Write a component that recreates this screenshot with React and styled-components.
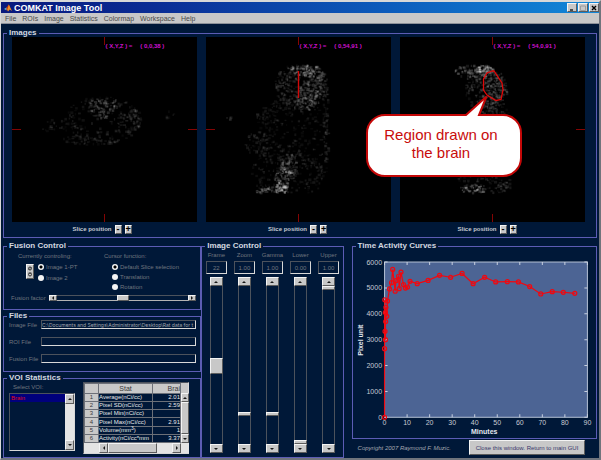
import React from 'react';
import styled, { createGlobalStyle, css } from 'styled-components';

const NAVY = '#001838';
const FACE = '#c8c8c8';
const DIM = '#70767f';

const GlobalStyle = createGlobalStyle`
  * { box-sizing: border-box; }
  body {
    margin: 0;
    background: ${NAVY};
    font-family: "Liberation Sans", Arial, sans-serif;
    font-size: 6px;
    line-height: 8px;
    color: ${DIM};
  }
  button, input { font: inherit; color: inherit; margin: 0; padding: 0; border-radius: 0; }
`;

const raised = css`
  background: ${FACE};
  border: 1px solid;
  border-color: #f4f4f4 #5c5c5c #5c5c5c #f4f4f4;
`;

const sunken = css`
  border: 1px solid;
  border-color: #4c525c #d8d8d8 #d8d8d8 #4c525c;
`;

/* ---------- window frame ---------- */

const Window = styled.div`
  min-height: 100vh;
  display: flex;
  flex-direction: column;
  border: 2px solid #70747c;
  border-top-color: #d8d8d8;
  border-left: 1px solid #d8d8d8;
  background: ${NAVY};
`;

const TitleBar = styled.header`
  height: 11px;
  display: flex;
  align-items: center;
  gap: 2px;
  padding: 0 0 0 3px;
  background: linear-gradient(90deg, #08187c 0%, #0a2c94 25%, #0c5cbc 65%, #1288d8 100%);
`;

const Title = styled.h1`
  margin: 0;
  flex: 1;
  color: #fff;
  font-size: 9px;
  line-height: 10px;
`;

const WindowButton = styled.button`
  ${raised}
  width: 10px;
  height: 9px;
  display: grid;
  place-items: center;
  svg { display: block; }
`;

const WindowButtons = styled.div`
  display: flex;
  gap: 1px;
`;

const MenuBar = styled.nav`
  height: 11px;
  display: flex;
  align-items: center;
  gap: 6px;
  padding: 0 4px;
  background: ${FACE};
  border-bottom: 1px solid #8c9098;
`;

const MenuItem = styled.button`
  border: 0;
  background: none;
  color: #484848;
  font-size: 7px;
  line-height: 9px;
`;

const Workspace = styled.main`
  flex: 1;
  display: flex;
  flex-direction: column;
  gap: 4px;
  padding: 5px 2px 0;
`;

/* ---------- panels ---------- */

const Panel = styled.fieldset`
  min-width: 0;
  margin: 0;
  padding: 0;
  display: flex;
  flex-direction: column;
  border: 1px solid #5c5cb4;
  flex: ${(p) => (p.$grow ? 1 : 'none')};
`;

const PanelTitle = styled.legend`
  margin-left: 3px;
  padding: 0 2px;
  color: #d4d8e0;
  font-size: 8px;
  font-weight: bold;
  line-height: 8px;
`;

const LowerArea = styled.div`
  flex: 1;
  display: grid;
  grid-template-columns: minmax(0, 198fr) minmax(0, 142fr) minmax(0, 253fr);
`;

const Column = styled.div`
  min-width: 0;
  display: flex;
  flex-direction: column;
  gap: ${(p) => p.$gap || 0}px;
  margin-left: ${(p) => (p.$inset ? 8 : 0)}px;
`;

/* ---------- slice views ---------- */

const SliceGrid = styled.div`
  display: grid;
  grid-template-columns: repeat(3, 1fr);
  gap: 9px;
  padding: 0 11px 1px 8px;
`;

const Viewport = styled.div`
  position: relative;
  aspect-ratio: 1;
  background: #000;
`;

const SliceDrawing = styled.svg`
  display: block;
  width: 100%;
  height: 100%;
`;

const Readout = styled.div`
  position: absolute;
  top: 5px;
  left: 50%;
  display: flex;
  gap: 8px;
  padding-left: 1px;
  color: #d010d0;
  font-weight: bold;
  white-space: nowrap;
`;

const SliceBar = styled.div`
  height: 14px;
  display: flex;
  align-items: center;
  justify-content: center;
  gap: 3px;
  padding-right: ${(p) => p.$trail}px;
  color: #c4c8d0;
  font-weight: bold;
`;

const StepButton = styled.button`
  ${raised}
  width: 7px;
  height: 9px;
  color: #000;
  font-size: 9px;
  font-weight: bold;
  line-height: 7px;
  display: grid;
  place-items: center;
`;

const Callout = styled.div`
  position: absolute;
  top: 57px;
  left: -35px;
  width: 158px;
  height: 84px;
`;

const CalloutShape = styled.svg`
  display: block;
  width: 158px;
  height: 84px;
`;

const CalloutText = styled.p`
  position: absolute;
  inset: 20px 6px 5px 0;
  margin: 0;
  display: grid;
  place-content: center;
  text-align: center;
  color: #c80c0c;
  font-size: 15px;
  line-height: 18px;
`;

/* ---------- form parts ---------- */

const FusionGrid = styled.div`
  display: grid;
  grid-template-columns: 86px 1fr;
  padding: 2px 4px 0 14px;
`;

const GroupLabel = styled.div`
  height: 8px;
`;

const RadioCluster = styled.div`
  display: flex;
  align-items: center;
  gap: 4px;
  padding-left: 8px;
`;

const RadioList = styled.div`
  display: flex;
  flex-direction: column;
  gap: ${(p) => p.$gap}px;
  padding-top: 3px;
`;

const RadioLabel = styled.label`
  display: flex;
  align-items: center;
  gap: 2px;
  line-height: 8px;
  white-space: nowrap;
`;

const Radio = styled.input`
  appearance: none;
  width: 6px;
  height: 6px;
  border-radius: 50%;
  background: #f4f4f4;
  &:checked {
    background: radial-gradient(circle, #000 0 1px, #f4f4f4 2px);
  }
`;

const LockButton = styled.button`
  ${raised}
  width: 8px;
  height: 15px;
  svg { display: block; }
`;

const SliderRow = styled.div`
  display: flex;
  align-items: center;
  gap: 3px;
  padding: 3px 4px 7px 7px;
`;

const HSlider = styled.div`
  flex: 1;
  height: 6px;
  display: flex;
  align-items: stretch;
`;

const ArrowButton = styled.button`
  ${raised}
  flex: none;
  width: ${(p) => p.$w}px;
  height: ${(p) => p.$h}px;
  display: grid;
  place-items: center;
  svg { display: block; }
`;

const HRange = styled.input`
  appearance: none;
  flex: 1;
  min-width: 0;
  height: 6px;
  background: transparent;
  border-top: 1px solid #4c525c;
  border-bottom: 1px solid #b4b4b4;
  &::-webkit-slider-thumb {
    appearance: none;
    ${raised}
    width: 12px;
    height: 6px;
  }
`;

const FileGrid = styled.div`
  display: grid;
  grid-template-columns: 32px 1fr;
  row-gap: 8px;
  padding: 0 4px 8px 5px;
  align-items: center;
`;

const FileLabel = styled.label`
  white-space: nowrap;
`;

const FileInput = styled.input`
  ${sunken}
  min-width: 0;
  width: 100%;
  height: 9px;
  background: transparent;
  color: #a0a4ac;
  font-family: Inter, "Liberation Sans", sans-serif;
  font-size: 5px;
`;

/* ---------- VOI statistics ---------- */

const VoiGrid = styled.div`
  display: grid;
  grid-template-columns: 66px 106px;
  column-gap: 8px;
  padding: 0 4px 2px 5px;
`;

const VoiPicker = styled.div`
  padding-top: 1px;
`;

const PickerLabel = styled.div`
  padding-left: 4px;
  height: 10px;
`;

const ListBox = styled.div`
  ${sunken}
  height: 58px;
  display: flex;
`;

const ListItems = styled.ul`
  flex: 1;
  margin: 0;
  padding: 0;
  list-style: none;
`;

const ListItem = styled.li`
  padding-left: 1px;
  line-height: 8px;
  background: #00007c;
  color: #e00818;
`;

const ScrollV = styled.div`
  width: 9px;
  display: flex;
  flex-direction: column;
  justify-content: space-between;
  background: #e4e4e4;
`;

const ScrollH = styled.div`
  grid-column: 1 / -1;
  height: 10px;
  display: flex;
  padding: 0 8px 0 15px;
  background: #e4e4e4;
`;

const ScrollThumb = styled.div`
  ${raised}
  flex: ${(p) => p.$size};
`;

const ScrollGap = styled.div`
  flex: ${(p) => p.$size};
`;

const StatsFrame = styled.div`
  ${sunken}
  display: grid;
  grid-template-columns: 1fr 8px;
  background: ${FACE};
`;

const StatsTable = styled.table`
  width: 96px;
  height: 60px;
  table-layout: fixed;
  border-collapse: collapse;
  color: #e8e8e8;
  line-height: 7px;
  background: ${NAVY};
  th, td {
    padding: 0;
    border: 1px solid #6c7078;
    font-weight: normal;
    white-space: nowrap;
  }
  th { background: ${FACE}; color: #383838; text-align: center; }
  thead th { height: 10px; font-size: 7px; }
  sup { font-size: 5px; line-height: 0; vertical-align: 2px; }
`;

const StatName = styled.td`
  text-align: left;
`;

const StatValue = styled.td`
  text-align: right;
`;

const BrainHead = styled.th`
  && { text-align: right; }
`;

const TableScroll = styled.div`
  display: flex;
  flex-direction: column;
  padding-top: 10px;
`;

/* ---------- image control ---------- */

const ControlGrid = styled.div`
  flex: 1;
  display: grid;
  grid-template-columns: repeat(5, 1fr);
  padding: 1px 0 4px;
`;

const ControlColumn = styled.div`
  display: flex;
  flex-direction: column;
  align-items: center;
`;

const ControlLabel = styled.label`
  height: 10px;
`;

const ControlValue = styled.input`
  ${sunken}
  width: 21px;
  height: 13px;
  margin-bottom: 3px;
  background: transparent;
  text-align: center;
`;

const VRange = styled.input`
  appearance: none;
  writing-mode: vertical-lr;
  direction: rtl;
  flex: 1;
  width: 13px;
  min-height: 0;
  background: transparent;
  border: solid #4c525c;
  border-width: 0 1px;
  &::-webkit-slider-thumb {
    appearance: none;
    ${raised}
    width: 13px;
    height: ${(p) => p.$thumb}px;
  }
`;

/* ---------- chart and footer ---------- */

const Chart = styled.svg`
  display: block;
  width: 100%;
  font-size: 7px;
  fill: #c8ccd4;
`;

const Footer = styled.footer`
  flex: 1;
  display: flex;
  align-items: center;
  justify-content: space-between;
  padding: 0 12px 2px 6px;
`;

const Copyright = styled.small`
  color: #a4a8b0;
  font-size: 6px;
  font-style: italic;
`;

const CloseButton = styled.button`
  ${raised}
  width: 116px;
  height: 15px;
  color: #38386c;
`;

/* ---------- data ---------- */

const MENUS = ['File', 'ROIs', 'Image', 'Statistics', 'Colormap', 'Workspace', 'Help'];

const SLICES = [
  {
    id: 'axial',
    position: '( 0,0,38 )',
    trail: 5,
    blobs: [
      { x: 90, y: 82, rx: 38, ry: 24, n: 160, v: 0.09 },
      { x: 84, y: 68, rx: 9, ry: 7, n: 40, v: 0.15 },
      { x: 99, y: 66, rx: 8, ry: 7, n: 30, v: 0.15 },
      { x: 91, y: 77, rx: 6, ry: 4, n: 16, v: 0.2 },
      { x: 119, y: 83, rx: 9, ry: 12, n: 50, v: 0.12 },
      { x: 78, y: 102, rx: 28, ry: 5, n: 60, v: 0.09 },
      { x: 45, y: 88, rx: 18, ry: 7, n: 30, v: 0.08 },
      { x: 155, y: 75, rx: 6, ry: 6, n: 6, v: 0.1 },
    ],
  },
  {
    id: 'coronal',
    position: '( 0,54,91 )',
    trail: 2,
    blobs: [
      { x: 95, y: 48, rx: 27, ry: 24, n: 340, v: 0.12 },
      { x: 98, y: 32, rx: 14, ry: 7, n: 60, v: 0.26 },
      { x: 108, y: 46, rx: 9, ry: 14, n: 70, v: 0.18 },
      { x: 97, y: 62, rx: 9, ry: 14, n: 60, v: 0.15 },
      { x: 86, y: 96, rx: 36, ry: 38, n: 240, v: 0.07 },
      { x: 119, y: 88, rx: 3, ry: 44, n: 70, v: 0.1 },
      { x: 60, y: 78, rx: 12, ry: 10, n: 26, v: 0.1 },
      { x: 52, y: 106, rx: 14, ry: 12, n: 60, v: 0.1 },
      { x: 82, y: 136, rx: 38, ry: 24, n: 220, v: 0.08 },
      { x: 82, y: 128, rx: 8, ry: 12, n: 80, v: 0.18 },
      { x: 76, y: 141, rx: 8, ry: 12, n: 70, v: 0.2 },
      { x: 74, y: 152, rx: 6, ry: 8, n: 34, v: 0.4 },
      { x: 64, y: 154, rx: 15, ry: 5, n: 44, v: 0.26 },
      { x: 20, y: 81, rx: 5, ry: 3, n: 5, v: 0.1 },
    ],
  },
  {
    id: 'sagittal',
    position: '( 54,0,91 )',
    trail: 11,
    blobs: [
      { x: 74, y: 33, rx: 20, ry: 8, n: 100, v: 0.2 },
      { x: 84, y: 31, rx: 8, ry: 4, n: 24, v: 0.3 },
      { x: 86, y: 52, rx: 21, ry: 24, n: 240, v: 0.12 },
      { x: 94, y: 50, rx: 9, ry: 14, n: 80, v: 0.15 },
      { x: 90, y: 76, rx: 18, ry: 14, n: 90, v: 0.09 },
      { x: 84, y: 144, rx: 28, ry: 14, n: 110, v: 0.1 },
      { x: 73, y: 153, rx: 12, ry: 6, n: 55, v: 0.26 },
      { x: 104, y: 148, rx: 8, ry: 5, n: 16, v: 0.13 },
    ],
  },
];

const STATS = [
  ['Average(nCi/cc)', '2.01'],
  ['Pixel SD(nCi/cc)', '2.59'],
  ['Pixel Min(nCi/cc)', ''],
  ['Pixel Max(nCi/cc)', '2.91'],
  [<>Volume(mm<sup>3</sup>)</>, '1'],
  ['Activity(nCi/cc*mm', '3.37'],
];

const CONTROLS = [
  { name: 'Frame', text: '22', value: 49, thumb: 16 },
  { name: 'Zoom', text: '1.00', value: 18, thumb: 4 },
  { name: 'Gamma', text: '1.00', value: 18, thumb: 4 },
  { name: 'Lower', text: '0.00', value: 0, thumb: 4 },
  { name: 'Upper', text: '1.00', value: 100, thumb: 4 },
];

const CURVE = [
  [0, 0], [0, 2650], [0.1, 4540], [0.2, 3320], [0.4, 3000], [0.4, 4050], [0.5, 3700],
  [0.6, 4250], [1, 3900], [1.3, 4490], [2.2, 4960], [3.1, 5200], [3.6, 5715], [4.7, 4870],
  [5, 5280], [6.2, 5450], [6.5, 4970], [7.3, 5610], [8.4, 5130], [9.3, 4995], [10.2, 5035],
  [11.3, 5255], [14.5, 5165], [19.3, 5290], [24.4, 5485], [29.3, 5410], [34.4, 5560],
  [39.3, 5165], [44.4, 5410], [49.3, 5230], [54.5, 5240], [59.4, 5230], [64.4, 5050],
  [69.3, 4765], [74.4, 4855], [79.3, 4830], [84.4, 4790],
];

/* ---------- drawings ---------- */

function randomSource(seed) {
  let s = seed;
  return () => {
    s = (s * 1664525 + 1013904223) % 4294967296;
    return s / 4294967296;
  };
}

function speckles(blobs, seed) {
  const rnd = randomSource(seed);
  const out = [];
  blobs.forEach((b) => {
    for (let i = 0; i < b.n; i += 1) {
      const a = rnd() * Math.PI * 2;
      const r = Math.sqrt(rnd());
      const x = b.x + Math.cos(a) * r * b.rx;
      const y = b.y + Math.sin(a) * r * b.ry;
      const w = 1.2 + rnd() * 2;
      const h = 1.2 + rnd() * 1.6;
      const o = b.v * (0.3 + rnd() * 0.8);
      if (y > 27.5 && y < 155) out.push({ x, y, w, h, o });
    }
  });
  return out;
}

const SPECKLES = SLICES.map((s, i) => speckles(s.blobs, 77 + i * 991));

function Slice({ slice, index, children }) {
  return (
    <div>
      <Viewport>
        <SliceDrawing viewBox="0 0 185 185" aria-label={`${slice.id} slice`}>
          {SPECKLES[index].map((s, i) => (
            <rect key={i} x={s.x} y={s.y} width={s.w} height={s.h} fill="#fff" opacity={s.o} />
          ))}
          <path d="M92.5 0V8M92.5 177V185M0 92.5H9M176 92.5H185" stroke="#840404" />
          {slice.id === 'coronal' && <path d="M92.5 34V61" stroke="#d00808" strokeWidth="1.4" />}
          {slice.id === 'sagittal' && (
            <path
              d="M92 34L87 36L83.5 42V53L87 58L96 63.5L101 62.5L103 53L102 46L94 34Z"
              fill="none"
              stroke="#e00808"
              strokeWidth="1.3"
            />
          )}
        </SliceDrawing>
        <Readout>
          <span>( X,Y,Z ) =</span>
          <span>{slice.position}</span>
        </Readout>
        {children}
      </Viewport>
      <SliceBar $trail={slice.trail}>
        <span>Slice position</span>
        <StepButton aria-label="Previous slice">-</StepButton>
        <StepButton aria-label="Next slice">+</StepButton>
      </SliceBar>
    </div>
  );
}

const ARROWS = {
  up: 'M0 3L2 1L4 3Z',
  down: 'M0 1L2 3L4 1Z',
  left: 'M3 0L1 2L3 4Z',
  right: 'M1 0L3 2L1 4Z',
};

function Arrow({ dir, w, h }) {
  return (
    <ArrowButton $w={w} $h={h} aria-label={dir}>
      <svg width="4" height="4" viewBox="0 0 4 4"><path d={ARROWS[dir]} fill="#181818" /></svg>
    </ArrowButton>
  );
}

function ActivityChart() {
  const px = (m) => 31.5 + m * 2.25;
  const py = (v) => 167 - v * (155 / 6000);
  const line = CURVE.map(([m, v]) => `${px(m).toFixed(1)},${py(v).toFixed(1)}`).join(' ');
  const xs = [0, 10, 20, 30, 40, 50, 60, 70, 80, 90];
  const ys = [0, 1000, 2000, 3000, 4000, 5000, 6000];
  return (
    <Chart viewBox="0 0 243 188" aria-label="Pixel unit over minutes">
      <rect x="31.5" y="12" width="202.5" height="155" fill="#4c6494" stroke="#b4c0d4" />
      {xs.map((m) => (
        <g key={m}>
          <path d={`M${px(m)} 167v-3M${px(m)} 12v3`} stroke="#c8d0e0" />
          <text x={px(m)} y="175" textAnchor="middle">{m}</text>
        </g>
      ))}
      {ys.map((v) => (
        <g key={v}>
          <path d={`M31.5 ${py(v)}h3M234 ${py(v)}h-3`} stroke="#c8d0e0" />
          <text x="29" y={py(v) + 2.5} textAnchor="end">{v}</text>
        </g>
      ))}
      <text x="131" y="184" textAnchor="middle" fontWeight="bold" fill="#e4e8f0">Minutes</text>
      <text transform="translate(10 90) rotate(-90)" textAnchor="middle" fontWeight="bold" fill="#e4e8f0">
        Pixel unit
      </text>
      <polyline points={line} fill="none" stroke="#f00810" strokeWidth="1.2" />
      {CURVE.map(([m, v], i) => (
        <circle key={i} cx={px(m)} cy={py(v)} r="2" fill="none" stroke="#f00810" strokeWidth="1.2" />
      ))}
    </Chart>
  );
}

export default function App() {
  return (
    <Window>
      <GlobalStyle />
      <TitleBar>
        <svg width="8" height="8" viewBox="0 0 8 8" aria-hidden="true">
          <path d="M0 5L2.5 3.6L4 4.6L2.4 6.2Z" fill="#5cb8d8" />
          <path d="M2.5 3.6L4.8 0.6L6 2.4L4 6L2.4 6.2Z" fill="#b83010" />
          <path d="M4.8 0.6L8 7L5.8 5.6L4 7.6L3.2 6Z" fill="#f09028" />
        </svg>
        <Title>COMKAT Image Tool</Title>
        <WindowButtons>
          <WindowButton aria-label="Minimize">
            <svg width="6" height="6"><path d="M1 5H4" stroke="#202020" strokeWidth="1.5" /></svg>
          </WindowButton>
          <WindowButton aria-label="Maximize">
            <svg width="6" height="6"><path d="M.5 1H5.5V5.5H.5Z" stroke="#9c9c9c" fill="none" /></svg>
          </WindowButton>
          <WindowButton aria-label="Close">
            <svg width="6" height="6"><path d="M1 1L5 5M5 1L1 5" stroke="#000" strokeWidth="1.4" /></svg>
          </WindowButton>
        </WindowButtons>
      </TitleBar>
      <MenuBar>
        {MENUS.map((m) => <MenuItem key={m}>{m}</MenuItem>)}
      </MenuBar>

      <Workspace>
        <Panel>
          <PanelTitle>Images</PanelTitle>
          <SliceGrid>
            {SLICES.map((s, i) => (
              <Slice key={s.id} slice={s} index={i}>
                {s.id === 'sagittal' && (
                  <Callout>
                    <CalloutShape viewBox="0 0 158 84" aria-hidden="true">
                      <path
                        d="M20 21H101L121.500 2.500L114 21H138A18 18 0 0 1 156 39V64A18 18 0 0 1 138 82H20A18 18 0 0 1 2 64V39A18 18 0 0 1 20 21Z"
                        fill="#fff"
                        stroke="#c40808"
                        strokeWidth="2"
                      />
                    </CalloutShape>
                    <CalloutText>
                      Region drawn on<br />the brain
                    </CalloutText>
                  </Callout>
                )}
              </Slice>
            ))}
          </SliceGrid>
        </Panel>

        <LowerArea>
          <Column $gap={2}>
            <Panel>
              <PanelTitle>Fusion Control</PanelTitle>
              <FusionGrid>
                <div role="radiogroup" aria-labelledby="controlling">
                  <GroupLabel id="controlling">Currently controling:</GroupLabel>
                  <RadioCluster>
                    <LockButton aria-label="Link images">
                      <svg width="6" height="13" viewBox="0 0 6 13">
                        <g fill="none" stroke="#303030">
                          <circle cx="3" cy="3.500" r="1.500" />
                          <circle cx="3" cy="9.500" r="1.500" />
                          <path d="M1.500 5L4.500 2M1.500 8H4.500" strokeWidth=".7" />
                        </g>
                      </svg>
                    </LockButton>
                    <RadioList $gap={3}>
                      <RadioLabel><Radio type="radio" name="image" defaultChecked />Image 1-PT</RadioLabel>
                      <RadioLabel><Radio type="radio" name="image" />Image 2</RadioLabel>
                    </RadioList>
                  </RadioCluster>
                </div>
                <div role="radiogroup" aria-labelledby="cursor">
                  <GroupLabel id="cursor">Cursor function:</GroupLabel>
                  <RadioCluster>
                    <RadioList $gap={2}>
                      <RadioLabel><Radio type="radio" name="cursor" defaultChecked />Default Slice selection</RadioLabel>
                      <RadioLabel><Radio type="radio" name="cursor" />Translation</RadioLabel>
                      <RadioLabel><Radio type="radio" name="cursor" />Rotation</RadioLabel>
                    </RadioList>
                  </RadioCluster>
                </div>
              </FusionGrid>
              <SliderRow>
                <label htmlFor="fusion">Fusion factor</label>
                <HSlider>
                  <Arrow dir="left" w={8} h={6} />
                  <HRange id="fusion" type="range" defaultValue="50" />
                  <Arrow dir="right" w={8} h={6} />
                </HSlider>
              </SliderRow>
            </Panel>

            <Panel>
              <PanelTitle>Files</PanelTitle>
              <FileGrid>
                <FileLabel htmlFor="f-image">Image File</FileLabel>
                <FileInput id="f-image" defaultValue="C:\Documents and Settings\Administrator\Desktop\Rat data for t" />
                <FileLabel htmlFor="f-roi">ROI File</FileLabel>
                <FileInput id="f-roi" />
                <FileLabel htmlFor="f-fusion">Fusion File</FileLabel>
                <FileInput id="f-fusion" />
              </FileGrid>
            </Panel>

            <Panel $grow>
              <PanelTitle>VOI Statistics</PanelTitle>
              <VoiGrid>
                <VoiPicker>
                  <PickerLabel id="voi">Select VOI:</PickerLabel>
                  <ListBox>
                    <ListItems role="listbox" aria-labelledby="voi">
                      <ListItem role="option" aria-selected="true">Brain</ListItem>
                    </ListItems>
                    <ScrollV>
                      <Arrow dir="up" w={9} h={10} />
                      <Arrow dir="down" w={9} h={10} />
                    </ScrollV>
                  </ListBox>
                </VoiPicker>
                <StatsFrame>
                  <StatsTable>
                    <colgroup>
                      <col width="14" />
                      <col width="54" />
                      <col width="28" />
                    </colgroup>
                    <thead>
                      <tr><th /><th>Stat</th><BrainHead>Brai</BrainHead></tr>
                    </thead>
                    <tbody>
                      {STATS.map(([name, value], i) => (
                        <tr key={i}>
                          <th>{i + 1}</th>
                          <StatName>{name}</StatName>
                          <StatValue>{value}</StatValue>
                        </tr>
                      ))}
                    </tbody>
                  </StatsTable>
                  <TableScroll>
                    <Arrow dir="up" w={8} h={9} />
                    <ScrollThumb $size={1} />
                    <Arrow dir="down" w={8} h={9} />
                  </TableScroll>
                  <ScrollH>
                    <Arrow dir="left" w={9} h={10} />
                    <ScrollThumb $size={3} />
                    <ScrollGap $size={1} />
                    <Arrow dir="right" w={9} h={10} />
                  </ScrollH>
                </StatsFrame>
              </VoiGrid>
            </Panel>
          </Column>

          <Column>
            <Panel $grow>
              <PanelTitle>Image Control</PanelTitle>
              <ControlGrid>
                {CONTROLS.map((c) => (
                  <ControlColumn key={c.name}>
                    <ControlLabel htmlFor={`c-${c.name}`}>{c.name}</ControlLabel>
                    <ControlValue id={`c-${c.name}`} defaultValue={c.text} />
                    <Arrow dir="up" w={13} h={9} />
                    <VRange type="range" aria-label={c.name} defaultValue={c.value} $thumb={c.thumb} />
                    <Arrow dir="down" w={13} h={9} />
                  </ControlColumn>
                ))}
              </ControlGrid>
            </Panel>
          </Column>

          <Column $inset>
            <Panel>
              <PanelTitle>Time Activity Curves</PanelTitle>
              <ActivityChart />
            </Panel>
            <Footer>
              <Copyright>Copyright 2007 Raymond F. Muzic.</Copyright>
              <CloseButton>Close this window. Return to main GUI</CloseButton>
            </Footer>
          </Column>
        </LowerArea>
      </Workspace>
    </Window>
  );
}
